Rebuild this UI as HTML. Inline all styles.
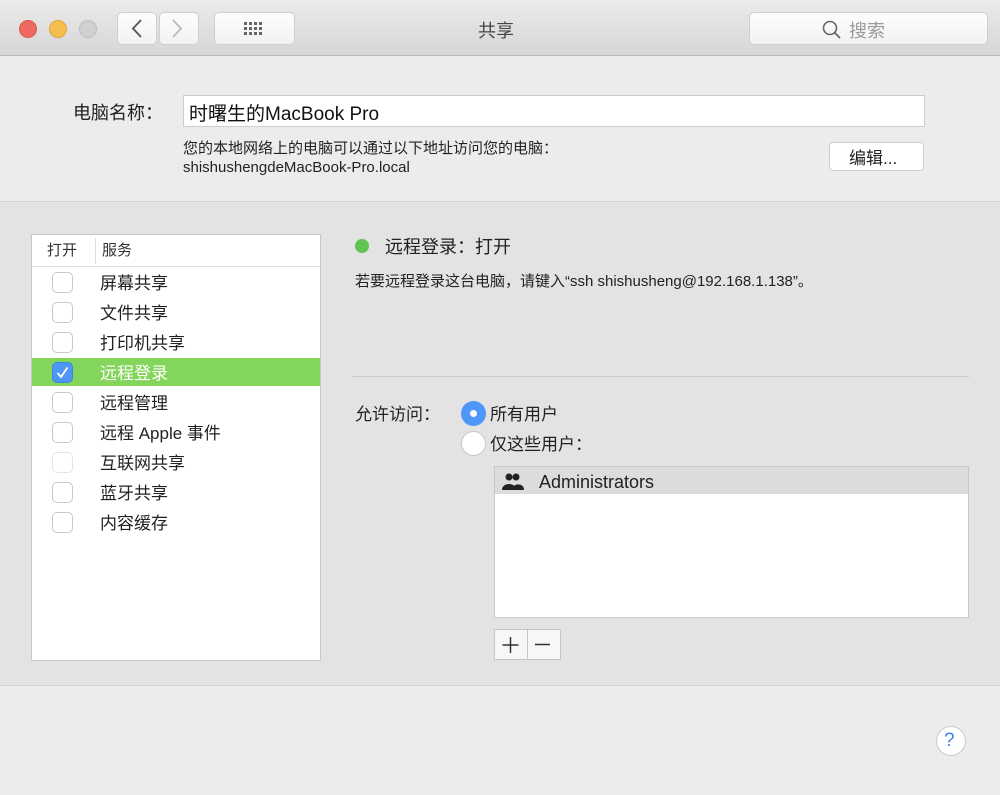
<!DOCTYPE html>
<html><head><meta charset="utf-8"><style>
*{margin:0;padding:0;box-sizing:border-box}
body{width:1000px;height:795px;background:#ececec;font-family:"Liberation Sans","Noto Sans CJK SC",sans-serif;color:#222;position:relative;overflow:hidden}
.a{position:absolute}
.tb{left:0;top:0;width:1000px;height:56px;background:linear-gradient(#ebebeb,#d6d6d6);border-bottom:1px solid #b8b8b8}
.dot{width:18px;height:18px;border-radius:50%;top:20px}
.btn{background:linear-gradient(#fdfdfd,#f2f2f2);border:1px solid #cfcfcf;border-radius:5px}
.t{white-space:nowrap}
.cb{width:21px;height:21px;border:1px solid #c8c8c8;border-radius:5px;background:#fff;left:52px}
.row{left:100px;font-size:17px}
</style></head><body>
<div class="a tb"></div>
<div class="a dot" style="left:19px;background:#ee6a5f;border:1px solid #d95a50"></div>
<div class="a dot" style="left:49px;background:#f6be4f;border:1px solid #dea43a"></div>
<div class="a dot" style="left:79px;background:#d0d0d0;border:1px solid #bdbdbd"></div>
<div class="a btn" style="left:117px;top:12px;width:40px;height:33px"></div>
<div class="a btn" style="left:159px;top:12px;width:40px;height:33px"></div>
<svg class="a" style="left:117px;top:12px" width="82" height="33"><path d="M24 8 L16 16.5 L24 25" fill="none" stroke="#555" stroke-width="1.8"/><path d="M56 8 L64 16.5 L56 25" fill="none" stroke="#bbb" stroke-width="1.8"/></svg>
<div class="a btn" style="left:214px;top:12px;width:81px;height:33px"></div>
<svg class="a" style="left:243px;top:20px" width="24" height="18"><g fill="#666"><rect x="1" y="2" width="3" height="3"/><rect x="6" y="2" width="3" height="3"/><rect x="11" y="2" width="3" height="3"/><rect x="16" y="2" width="3" height="3"/><rect x="1" y="7" width="3" height="3"/><rect x="6" y="7" width="3" height="3"/><rect x="11" y="7" width="3" height="3"/><rect x="16" y="7" width="3" height="3"/><rect x="1" y="12" width="3" height="3"/><rect x="6" y="12" width="3" height="3"/><rect x="11" y="12" width="3" height="3"/><rect x="16" y="12" width="3" height="3"/></g></svg>
<div class="a t" style="left:478px;top:17px;font-size:18px;color:#444">共享</div>
<div class="a btn" style="left:749px;top:12px;width:239px;height:33px"></div>
<svg class="a" style="left:821px;top:19px" width="22" height="22"><circle cx="9" cy="9" r="6.5" fill="none" stroke="#666" stroke-width="1.6"/><path d="M13.5 13.5 L19 19" stroke="#666" stroke-width="1.8"/></svg>
<div class="a t" style="left:849px;top:17px;font-size:18px;color:#999">搜索</div>

<div class="a t" style="left:73px;top:99px;font-size:18px">电脑名称：</div>
<div class="a" style="left:183px;top:95px;width:742px;height:32px;background:#fff;border:1px solid #cdcdcd"></div>
<div class="a t" style="left:189px;top:99px;font-size:19px;color:#111">时曙生的MacBook Pro</div>
<div class="a t" style="left:183px;top:137px;font-size:15px">您的本地网络上的电脑可以通过以下地址访问您的电脑：</div>
<div class="a t" style="left:183px;top:159px;font-size:15px">shishushengdeMacBook-Pro.local</div>
<div class="a btn" style="left:829px;top:142px;width:95px;height:29px;background:#fff;border-radius:4px"></div>
<div class="a t" style="left:849px;top:144px;font-size:17px">编辑...</div>

<div class="a" style="left:0;top:201px;width:1000px;height:485px;background:#e3e3e3;border-top:1px solid #d4d4d4;border-bottom:1px solid #d4d4d4"></div>

<div class="a" style="left:31px;top:234px;width:290px;height:427px;background:#fff;border:1px solid #c8c8c8"></div>
<div class="a" style="left:32px;top:235px;width:288px;height:32px;border-bottom:1px solid #e0e0e0"></div>
<div class="a" style="left:95px;top:238px;width:1px;height:26px;background:#ddd"></div>
<div class="a t" style="left:47px;top:239px;font-size:15px;color:#333">打开</div>
<div class="a t" style="left:102px;top:239px;font-size:15px;color:#333">服务</div>
<div class="a" style="left:32px;top:358px;width:288px;height:28px;background:#83d55c"></div>

<div class="a cb" style="top:272px"></div><div class="a t row" style="top:269px">屏幕共享</div>
<div class="a cb" style="top:302px"></div><div class="a t row" style="top:299px">文件共享</div>
<div class="a cb" style="top:332px"></div><div class="a t row" style="top:329px">打印机共享</div>
<div class="a cb" style="top:362px;background:#4f97f6;border-color:#3c84e3"></div>
<svg class="a" style="left:52px;top:362px" width="21" height="21"><path d="M5.5 11 L9 15 L15.5 5.5" fill="none" stroke="#fff" stroke-width="1.8"/></svg>
<div class="a t row" style="top:359px;color:#fff">远程登录</div>
<div class="a cb" style="top:392px"></div><div class="a t row" style="top:389px">远程管理</div>
<div class="a cb" style="top:422px"></div><div class="a t row" style="top:419px">远程 Apple 事件</div>
<div class="a cb" style="top:452px;border-color:#e4e4e4"></div><div class="a t row" style="top:449px">互联网共享</div>
<div class="a cb" style="top:482px"></div><div class="a t row" style="top:479px">蓝牙共享</div>
<div class="a cb" style="top:512px"></div><div class="a t row" style="top:509px">内容缓存</div>

<div class="a" style="left:355px;top:239px;width:14px;height:14px;border-radius:50%;background:#5fc451"></div>
<div class="a t" style="left:385px;top:233px;font-size:18px">远程登录：打开</div>
<div class="a t" style="left:355px;top:270px;font-size:15px">若要远程登录这台电脑，请键入“ssh shishusheng@192.168.1.138”。</div>
<div class="a" style="left:352px;top:376px;width:617px;height:1px;background:#c9c9c9"></div>

<div class="a t" style="left:355px;top:400px;font-size:17px">允许访问：</div>
<div class="a" style="left:461px;top:401px;width:25px;height:25px;border-radius:50%;background:#4f97f6"></div>
<div class="a" style="left:470px;top:410px;width:7px;height:7px;border-radius:50%;background:#fff"></div>
<div class="a t" style="left:490px;top:400px;font-size:17px">所有用户</div>
<div class="a" style="left:461px;top:431px;width:25px;height:25px;border-radius:50%;background:#fff;border:1px solid #c8c8c8"></div>
<div class="a t" style="left:490px;top:430px;font-size:17px">仅这些用户：</div>

<div class="a" style="left:494px;top:466px;width:475px;height:152px;background:#fff;border:1px solid #c8c8c8"></div>
<div class="a" style="left:495px;top:467px;width:473px;height:27px;background:#dcdcdc"></div>
<svg class="a" style="left:500px;top:472px" width="26" height="20"><g fill="#222"><circle cx="9" cy="5" r="3.5"/><path d="M2 18 C2 10 16 10 16 18Z"/><circle cx="16" cy="5" r="3.5"/><path d="M12 18 C12 11 24 10 24 18Z"/></g></svg>
<div class="a t" style="left:539px;top:472px;font-size:18px">Administrators</div>

<div class="a" style="left:494px;top:629px;width:67px;height:31px;background:#f7f7f7;border:1px solid #c6c6c6"></div>
<div class="a" style="left:527px;top:630px;width:1px;height:29px;background:#c6c6c6"></div>
<svg class="a" style="left:494px;top:629px" width="67" height="31"><path d="M16.5 8 V24 M8.5 16 H24.5 M41 15.5 H56" stroke="#333" stroke-width="1.5"/></svg>

<div class="a" style="left:936px;top:726px;width:30px;height:30px;border-radius:50%;background:#fff;border:1px solid #cacaca"></div>
<div class="a t" style="left:944px;top:730px;font-size:19px;color:#3b82f0">?</div>
</body></html>
